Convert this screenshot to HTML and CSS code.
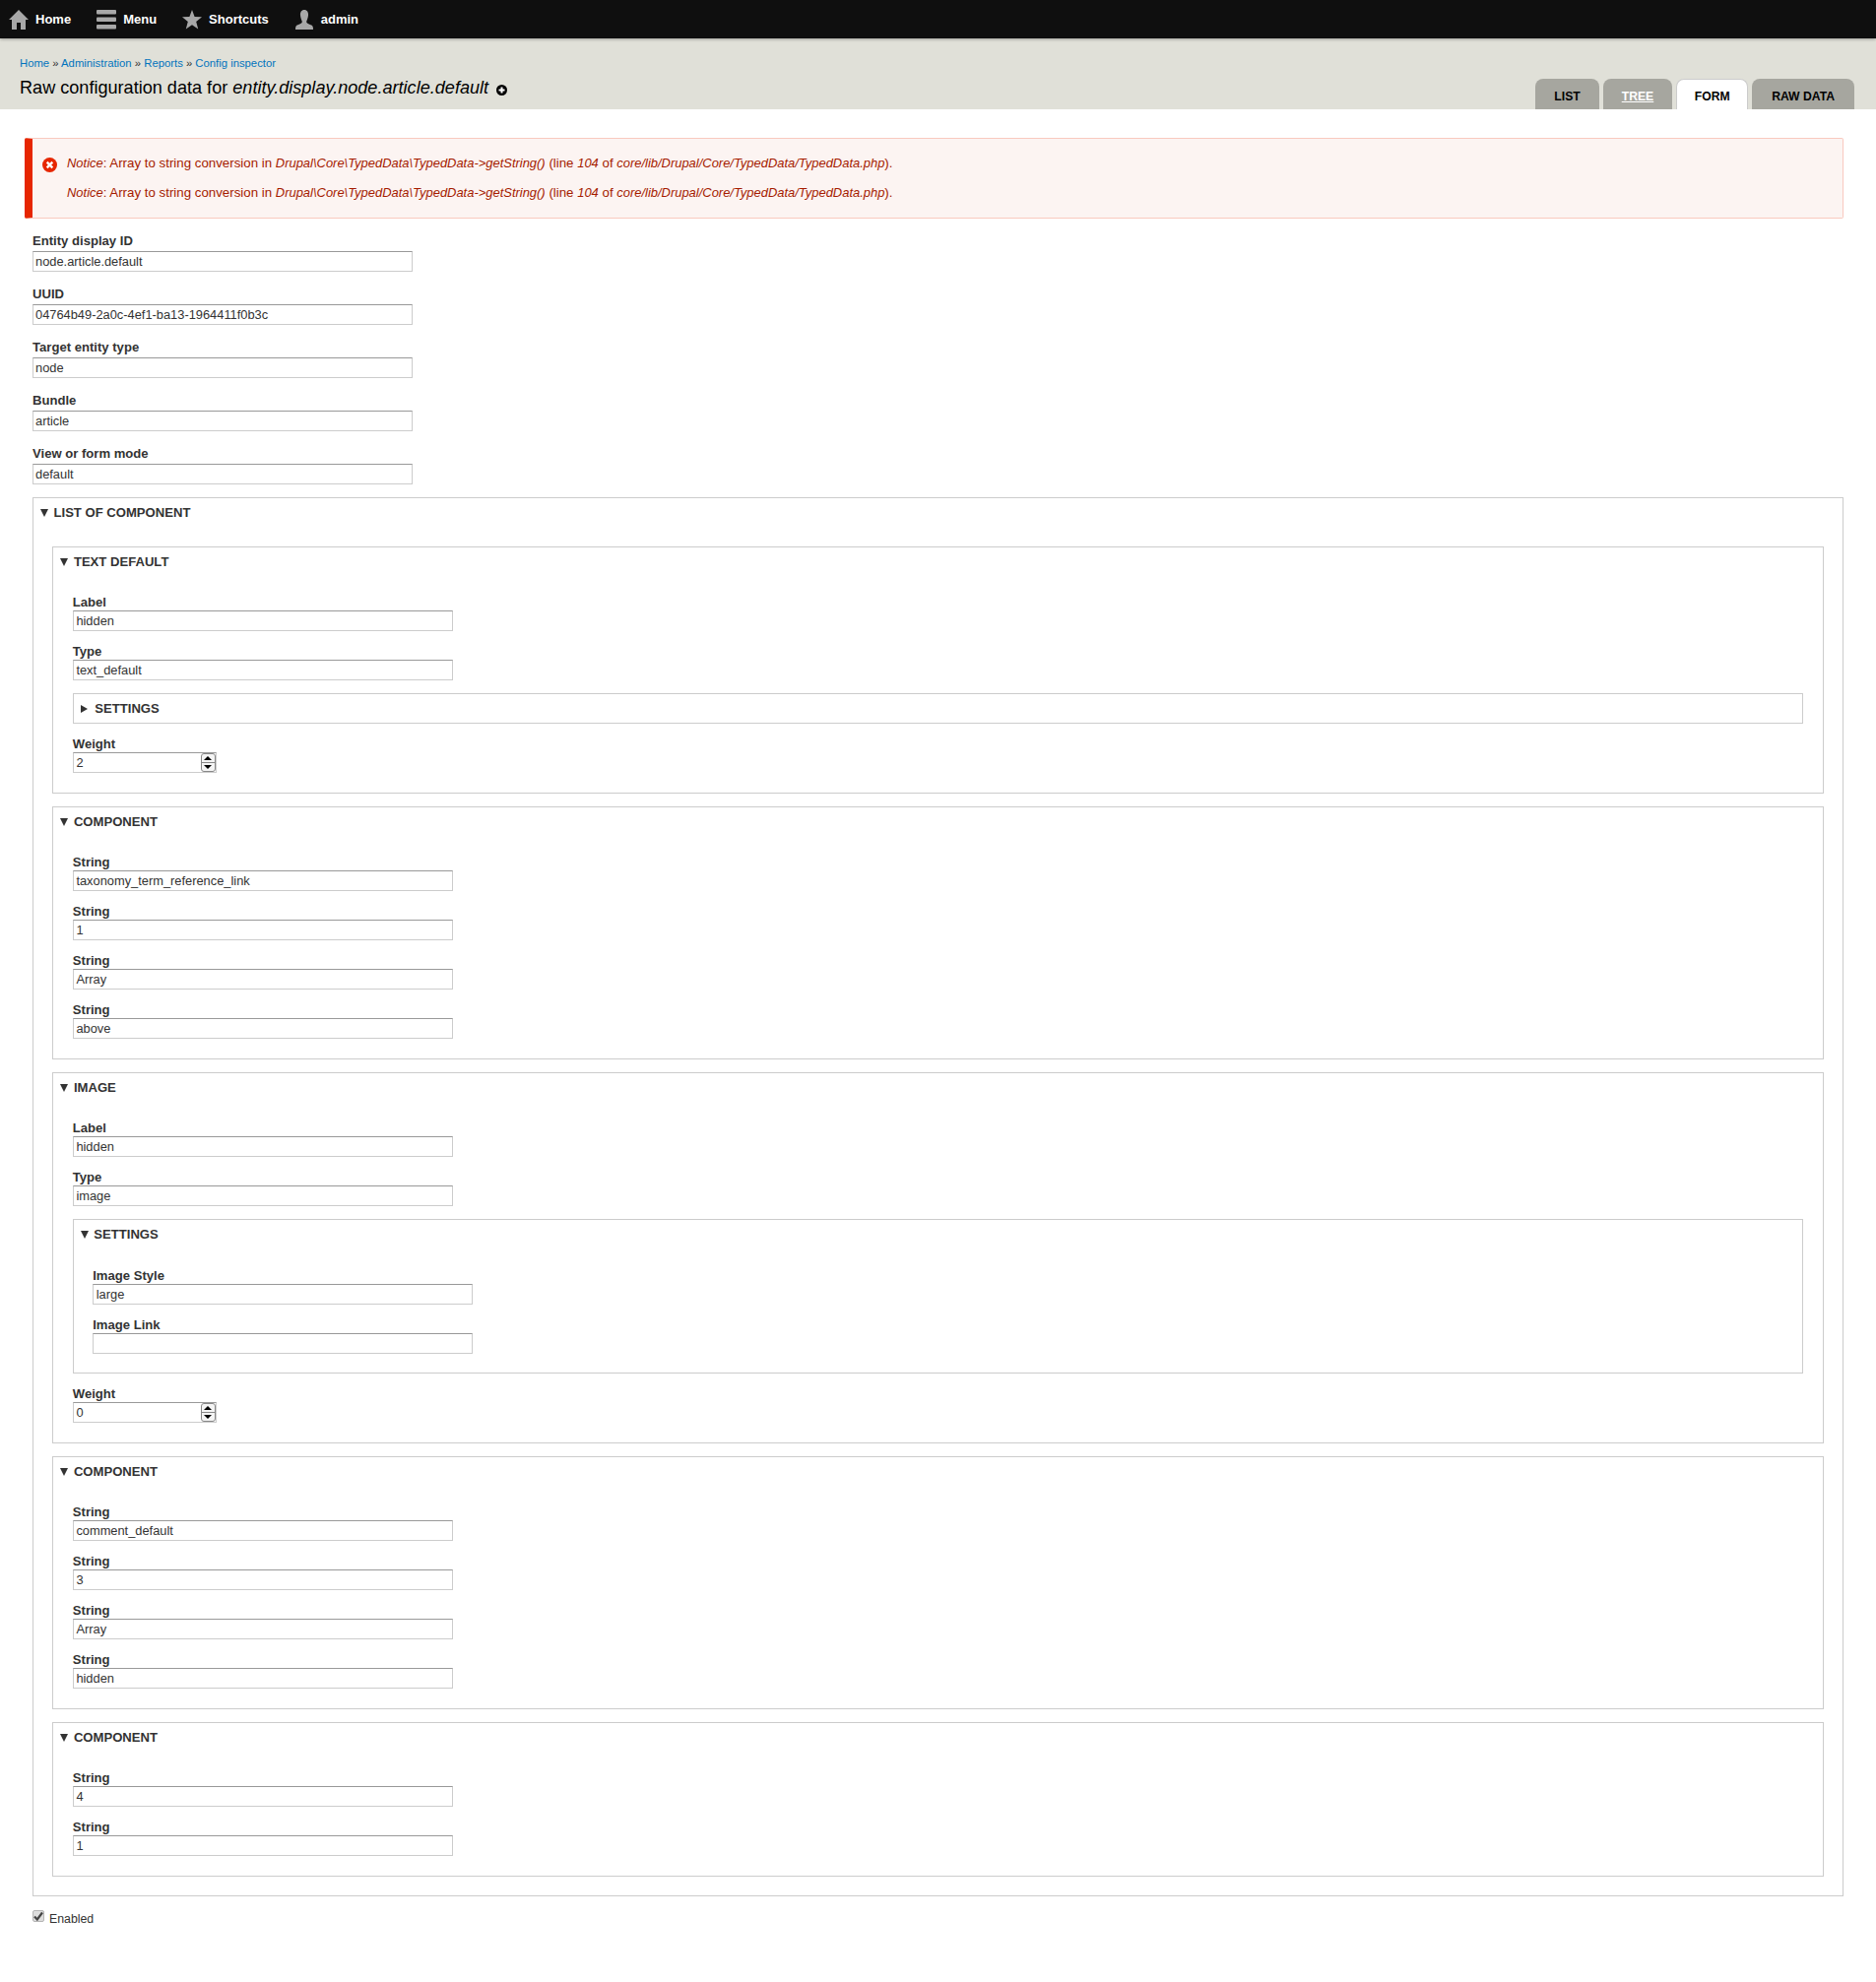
FILE: index.html
```html
<!DOCTYPE html>
<html lang="en">
<head>
    <meta charset="UTF-8">
    <meta name="viewport" content="width=device-width, initial-scale=1.0">
    <title>Raw configuration data</title>
    <link rel="stylesheet" href="styles.css">
</head>
<body>

    <!-- Admin Toolbar -->
    <div class="toolbar">
        <a class="toolbar-item" href="#">
            <svg width="20" height="20" viewBox="0 0 20 20"><path d="M10 0 L20 10 L17 10 L17 20 L12 20 L12 13 L8 13 L8 20 L3 20 L3 10 L0 10 Z"/></svg>
            Home
        </a>
        <a class="toolbar-item" href="#">
            <svg width="20" height="20" viewBox="0 0 20 20"><rect x="0" y="0" width="20" height="4.5" rx="1"/><rect x="0" y="7.5" width="20" height="4.5" rx="1"/><rect x="0" y="15" width="20" height="4.5" rx="1"/></svg>
            Menu
        </a>
        <a class="toolbar-item" href="#">
            <svg width="20" height="20" viewBox="0 0 20 20"><path d="M10 0 L12.6 6.9 L20 7.3 L14.2 11.9 L16.2 19.5 L10 15.3 L3.8 19.5 L5.8 11.9 L0 7.3 L7.4 6.9 Z"/></svg>
            Shortcuts
        </a>
        <a class="toolbar-item" href="#">
            <svg width="20" height="20" viewBox="0 0 20 20"><path d="M10 0 C13 0 14.2 2.4 14 5.5 C13.8 8.5 12.6 10.5 12.2 12 C12 13.5 14 14.3 16.5 15.3 C18.5 16 19 17 19 20 L1 20 C1 17 1.5 16 3.5 15.3 C6 14.3 8 13.5 7.8 12 C7.4 10.5 6.2 8.5 6 5.5 C5.8 2.4 7 0 10 0 Z"/></svg>
            admin
        </a>
    </div>

    <!-- Page Header -->
    <div class="page-header">
        <div class="page-title">
            <div class="breadcrumb">
                <a href="#">Home</a> » <a href="#">Administration</a> » <a href="#">Reports</a> » <a href="#">Config inspector</a>
            </div>
            <h1>Raw configuration data for <em>entity.display.node.article.default</em>
                <svg class="shortcut-icon" width="11" height="11" viewBox="0 0 11 11"><circle cx="5.5" cy="5.5" r="5.5" fill="#000"/><path d="M2.5 5.5 H8.5 M5.5 2.5 V8.5" stroke="#fff" stroke-width="2"/></svg>
            </h1>
        </div>
        <ul class="tabs">
            <li class="tab"><a href="#">List</a></li>
            <li class="tab tab-tree"><a href="#">Tree</a></li>
            <li class="tab active"><a href="#">Form</a></li>
            <li class="tab tab-raw"><a href="#">Raw data</a></li>
        </ul>
    </div>

    <div class="content">

        <!-- Error Messages -->
        <div class="message-error">
            <svg class="message-icon" width="15" height="15" viewBox="0 0 15 15"><circle cx="7.5" cy="7.5" r="7.5" fill="#e62600"/><path d="M4.7 4.7 L10.3 10.3 M10.3 4.7 L4.7 10.3" stroke="#fff" stroke-width="2.4"/></svg>
            <ul>
                <li><em>Notice</em>: Array to string conversion in <em>Drupal\Core\TypedData\TypedData-&gt;getString()</em> (line <em>104</em> of <em>core/lib/Drupal/Core/TypedData/TypedData.php</em>).</li>
                <li><em>Notice</em>: Array to string conversion in <em>Drupal\Core\TypedData\TypedData-&gt;getString()</em> (line <em>104</em> of <em>core/lib/Drupal/Core/TypedData/TypedData.php</em>).</li>
            </ul>
        </div>

        <!-- Top Level Fields -->
        <div class="top-fields">
            <div class="field"><label>Entity display ID</label><input type="text" value="node.article.default"></div>
            <div class="field"><label>UUID</label><input type="text" value="04764b49-2a0c-4ef1-ba13-1964411f0b3c"></div>
            <div class="field"><label>Target entity type</label><input type="text" value="node"></div>
            <div class="field"><label>Bundle</label><input type="text" value="article"></div>
            <div class="field"><label>View or form mode</label><input type="text" value="default"></div>
        </div>

        <div class="fieldset">
            <div class="legend"><span class="arrow-down"></span>LIST OF COMPONENT</div>
            <div class="fieldset-body list-body">

                <div class="fieldset">
                    <div class="legend"><span class="arrow-down"></span>TEXT DEFAULT</div>
                    <div class="fieldset-body">
                        <div class="field"><label>Label</label><input type="text" value="hidden"></div>
                        <div class="field"><label>Type</label><input type="text" value="text_default"></div>
                        <div class="fieldset">
                            <div class="legend"><span class="arrow-right"></span>SETTINGS</div>
                        </div>
                        <div class="field">
                            <label>Weight</label>
                            <div class="number-input">
                                <input type="text" value="2">
                                <div class="spinner"><span class="spin-up"></span><span class="spin-down"></span></div>
                            </div>
                        </div>
                    </div>
                </div>

                <div class="fieldset">
                    <div class="legend"><span class="arrow-down"></span>COMPONENT</div>
                    <div class="fieldset-body">
                        <div class="field"><label>String</label><input type="text" value="taxonomy_term_reference_link"></div>
                        <div class="field"><label>String</label><input type="text" value="1"></div>
                        <div class="field"><label>String</label><input type="text" value="Array"></div>
                        <div class="field"><label>String</label><input type="text" value="above"></div>
                    </div>
                </div>

                <div class="fieldset">
                    <div class="legend"><span class="arrow-down"></span>IMAGE</div>
                    <div class="fieldset-body">
                        <div class="field"><label>Label</label><input type="text" value="hidden"></div>
                        <div class="field"><label>Type</label><input type="text" value="image"></div>
                        <div class="fieldset">
                            <div class="legend"><span class="arrow-down"></span>SETTINGS</div>
                            <div class="fieldset-body settings-body">
                                <div class="field"><label>Image Style</label><input type="text" value="large"></div>
                                <div class="field"><label>Image Link</label><input type="text" value=""></div>
                            </div>
                        </div>
                        <div class="field">
                            <label>Weight</label>
                            <div class="number-input">
                                <input type="text" value="0">
                                <div class="spinner"><span class="spin-up"></span><span class="spin-down"></span></div>
                            </div>
                        </div>
                    </div>
                </div>

                <div class="fieldset">
                    <div class="legend"><span class="arrow-down"></span>COMPONENT</div>
                    <div class="fieldset-body">
                        <div class="field"><label>String</label><input type="text" value="comment_default"></div>
                        <div class="field"><label>String</label><input type="text" value="3"></div>
                        <div class="field"><label>String</label><input type="text" value="Array"></div>
                        <div class="field"><label>String</label><input type="text" value="hidden"></div>
                    </div>
                </div>

                <div class="fieldset">
                    <div class="legend"><span class="arrow-down"></span>COMPONENT</div>
                    <div class="fieldset-body">
                        <div class="field"><label>String</label><input type="text" value="4"></div>
                        <div class="field"><label>String</label><input type="text" value="1"></div>
                    </div>
                </div>

            </div>
        </div>

        <!-- Enabled Checkbox -->
        <div class="checkbox-row">
            <span class="checkbox">
                <svg width="10" height="10" viewBox="0 0 10 10"><path d="M1 5.5 L3.8 8.5 L9 1.5" fill="none" stroke="#444" stroke-width="2.2"/></svg>
            </span>
            Enabled
        </div>

    </div>

</body>
</html>
```

FILE: styles.css
```css
body {
    font-family: "Liberation Sans", Arial, sans-serif;
    font-size: 13px;
    color: #333;
    margin: 0;
    background-color: #fff;
    min-height: 2013px;
}

a {
    color: #0074bd;
    text-decoration: none;
}

/* Toolbar */
.toolbar {
    display: flex;
    align-items: center;
    gap: 26px;
    height: 39px;
    padding-left: 9px;
    background-color: #0f0f0f;
    box-shadow: 0 1px 3px rgba(0, 0, 0, 0.3);
    position: relative;
}

.toolbar-item {
    display: flex;
    align-items: center;
    gap: 7px;
    color: #fff;
    font-weight: bold;
}

.toolbar-item svg {
    fill: #a8a8a8;
}

/* Header */
.page-header {
    display: flex;
    justify-content: space-between;
    align-items: flex-end;
    height: 72px;
    padding: 0 22px 0 20px;
    background-color: #e0e0d8;
}

.page-title {
    align-self: flex-start;
    padding-top: 18px;
}

.breadcrumb {
    font-size: 11.3px;
    line-height: 15px;
}

.page-title h1 {
    margin: 5px 0 0;
    font-size: 18.1px;
    line-height: 24px;
    font-weight: normal;
    color: #000;
}

.shortcut-icon {
    margin-left: 3px;
    vertical-align: -2px;
}

.tabs {
    display: flex;
    gap: 4px;
    margin: 0;
    padding: 0;
    list-style: none;
}

.tab {
    height: 31px;
    line-height: 36px;
    padding: 0 19px;
    background-color: #a6a69f;
    border-radius: 8px 8px 0 0;
    font-size: 12.2px;
    font-weight: bold;
    text-transform: uppercase;
}

.tab a {
    color: #000;
}

.tab-tree a {
    color: #fff;
    text-decoration: underline;
}

.tab-raw {
    padding: 0 20px;
}

.tab.active {
    padding: 0 17.5px;
    background-color: #fff;
    border: 1px solid #ccc;
    border-bottom: none;
    height: 30px;
    line-height: 34px;
}

/* Content */
.content {
    padding: 29px 33px 0;
}

.message-error {
    display: flex;
    gap: 10px;
    margin-left: -8px;
    padding: 15px 10px 15px 10px;
    background-color: #fcf4f2;
    border: 1px solid #f9c9bf;
    border-left: 8px solid #e62600;
    border-radius: 2px;
    color: #a51b00;
    font-size: 13.3px;
}

.message-error em {
    font-size: 12.95px;
}

.message-icon {
    margin-top: 4px;
    flex-shrink: 0;
}

.message-error ul {
    margin: 0;
    padding: 0;
    list-style: none;
    line-height: 20px;
}

.message-error li + li {
    margin-top: 10px;
}

/* Form fields */
.top-fields .field {
    margin-top: 16px;
}

.top-fields .field label {
    line-height: 13px;
}

.field {
    margin-top: 12px;
}

.field label {
    display: block;
    height: 17px;
    line-height: 17px;
    font-size: 13.1px;
    font-weight: bold;
}

.field input {
    display: block;
    box-sizing: border-box;
    width: 386px;
    height: 21px;
    padding: 2px;
    border: 1px solid #ccc;
    border-top-color: #999;
    font-family: inherit;
    font-size: 12.85px;
    color: #333;
    background-color: #fff;
}

.fieldset-body .field input {
    padding-left: 2.6px;
}

.number-input {
    position: relative;
    width: 146px;
}

.number-input input {
    width: 100%;
}

.spinner {
    position: absolute;
    top: 1px;
    right: 1px;
    width: 13px;
    height: 17px;
    display: flex;
    flex-direction: column;
    border: 1px solid #888;
    border-radius: 3px;
    background-color: #f4f4f4;
}

.spin-up,
.spin-down {
    flex: 1;
    position: relative;
}

.spin-up {
    border-bottom: 1px solid #888;
}

.spin-up::after,
.spin-down::after {
    content: "";
    position: absolute;
    left: 2.5px;
    top: 2px;
    border-left: 4px solid transparent;
    border-right: 4px solid transparent;
}

.spin-up::after {
    border-bottom: 4px solid #000;
}

.spin-down::after {
    border-top: 4px solid #000;
}

/* Fieldsets */
.fieldset {
    margin-top: 13px;
    border: 1px solid #ccc;
}

.legend {
    display: flex;
    align-items: center;
    gap: 6px;
    height: 29px;
    padding: 0 7px;
    font-size: 13.1px;
    font-weight: bold;
    color: #333;
}

.fieldset-body {
    padding: 6px 19.4px 20px;
}

.list-body {
    padding-top: 7px;
    padding-bottom: 19px;
}

.settings-body {
    padding-top: 7px;
    padding-bottom: 19px;
}

.arrow-down {
    width: 0;
    height: 0;
    border-left: 4.5px solid transparent;
    border-right: 4.5px solid transparent;
    border-top: 8px solid #333;
    margin-right: -0.5px;
}

.arrow-right {
    width: 0;
    height: 0;
    border-top: 4.5px solid transparent;
    border-bottom: 4.5px solid transparent;
    border-left: 7px solid #333;
    margin-right: 1.5px;
}

/* Checkbox */
.checkbox-row {
    display: flex;
    align-items: flex-start;
    gap: 5px;
    margin-top: 15px;
    font-size: 12.3px;
    line-height: 14px;
    padding-top: 1px;
}

.checkbox {
    display: flex;
    align-items: center;
    justify-content: center;
    box-sizing: border-box;
    width: 12px;
    height: 12px;
    margin-top: -2px;
    background-color: #ddd;
    border: 1px solid #b5b5b5;
    border-radius: 2px;
}
```
